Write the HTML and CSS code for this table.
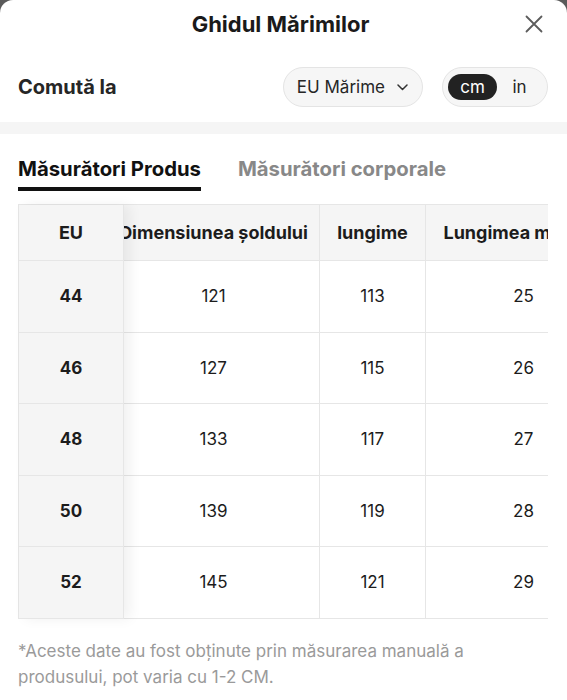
FILE: index.html
```html
<!DOCTYPE html>
<html lang="ro">
<head>
<meta charset="UTF-8">
<title>Ghidul Mărimilor</title>
<link rel="stylesheet" href="styles.css">
</head>
<body>
<div class="sheet">
	<div class="header">
		<span></span>
		<div class="title">Ghidul Mărimilor</div>
		<button class="close" aria-label="Închide">
			<svg width="18" height="18" viewBox="0 0 18 18"><path d="M1.5 1.5 L16.5 16.5 M16.5 1.5 L1.5 16.5" stroke="#5c5c5c" stroke-width="1.8" stroke-linecap="round" fill="none"/></svg>
		</button>
	</div>

	<div class="switch-row">
		<div class="switch-label">Comută la</div>
		<div class="select">EU Mărime
			<svg width="11" height="7" viewBox="0 0 11 7"><path d="M1 1 L5.5 5.5 L10 1" stroke="#333" stroke-width="1.5" fill="none" stroke-linecap="round" stroke-linejoin="round"/></svg>
		</div>
		<div class="units">
			<span class="unit on">cm</span>
			<span class="unit">in</span>
		</div>
	</div>

	<div class="band"></div>

	<div class="tabs">
		<div class="tab active">Măsurători Produs</div>
		<div class="tab">Măsurători corporale</div>
	</div>

	<div class="size-table">
		<div class="fixed-col">
			<div class="cell head">EU</div>
			<div class="cell">44</div>
			<div class="cell">46</div>
			<div class="cell">48</div>
			<div class="cell">50</div>
			<div class="cell">52</div>
		</div>
		<div class="scroller">
			<div class="grid">
				<div class="cell head">Dimensiunea șoldului</div>
				<div class="cell head">lungime</div>
				<div class="cell head">Lungimea mânecii</div>

				<div class="cell">121</div><div class="cell">113</div><div class="cell">25</div>
				<div class="cell">127</div><div class="cell">115</div><div class="cell">26</div>
				<div class="cell">133</div><div class="cell">117</div><div class="cell">27</div>
				<div class="cell">139</div><div class="cell">119</div><div class="cell">28</div>
				<div class="cell">145</div><div class="cell">121</div><div class="cell">29</div>
			</div>
		</div>
	</div>

	<p class="note">*Aceste date au fost obținute prin măsurarea manuală a produsului, pot varia cu 1-2 CM.</p>
</div>
</body>
</html>
```

FILE: styles.css
```css
body { margin: 0; background: #5a5a5a; font-family: Inter, "Noto Sans", sans-serif; color: #1c1c1c; }

.sheet { background: #fff; border-radius: 13px 13px 0 0; min-height: 700px; overflow: hidden; }

.header { height: 48px; display: grid; grid-template-columns: 1fr auto 1fr; align-items: center; padding: 0 24px 0 18px; }
.title { font-size: 22px; font-weight: 700; color: #1a1a1a; }
.close { justify-self: end; border: 0; background: none; padding: 0; width: 18px; height: 18px; display: flex; cursor: pointer; }

.switch-row { display: flex; align-items: center; gap: 19px; padding: 19px 19px 15px 18px; }
.switch-label { flex: 1; font-size: 20px; font-weight: 700; color: #262626; }

.select { height: 40px; box-sizing: border-box; display: flex; align-items: center; gap: 12px;
	padding: 0 14px 0 13px; border: 1px solid #e4e4e4; border-radius: 20px; background: #f6f6f6;
	font-size: 17px; color: #262626; }

.units { height: 40px; box-sizing: border-box; display: flex; align-items: center; padding: 0 5px;
	border: 1px solid #e4e4e4; border-radius: 20px; background: #f6f6f6; }
.unit { height: 26px; width: 45px; display: flex; align-items: center; justify-content: center;
	font-size: 17px; color: #262626; border-radius: 13px; }
.unit.on { width: 49px; background: #222; color: #fff; }

.band { height: 12px; background: #f5f5f5; }

.tabs { display: flex; gap: 37px; padding: 23px 18px 0; }
.tab { font-size: 20.3px; font-weight: 700; line-height: 24px; color: #888; padding-bottom: 6px; border-bottom: 4px solid transparent; }
.tab.active { color: #111; border-bottom-color: #111; }

.size-table { display: flex; margin: 13px 19px 0 18px; border-top: 1px solid #e6e6e6; border-left: 1px solid #e6e6e6; }

.cell { height: 71.5px; box-sizing: border-box; display: flex; align-items: center; justify-content: center;
	border-bottom: 1px solid #e6e6e6; border-right: 1px solid #e6e6e6; font-size: 17px; color: #1c1c1c; white-space: nowrap; }
.cell.head { height: 56px; background: #f5f5f5; font-weight: 700; font-size: 18px; }

.fixed-col { flex: none; width: 105px; position: relative; z-index: 2; background: #f5f5f5;
	box-shadow: 6px 0 12px rgba(0,0,0,0.06); }
.fixed-col .cell { font-weight: 700; }

.scroller { flex: 1; overflow: hidden; }
/* scrolled 16px to the right */
.grid { display: grid; grid-template-columns: 212px 106px 196px; margin-left: -16px; width: max-content; }

.note { margin: 19px 18px 0; font-size: 17px; line-height: 26px; color: #9a9a9a; }
```
